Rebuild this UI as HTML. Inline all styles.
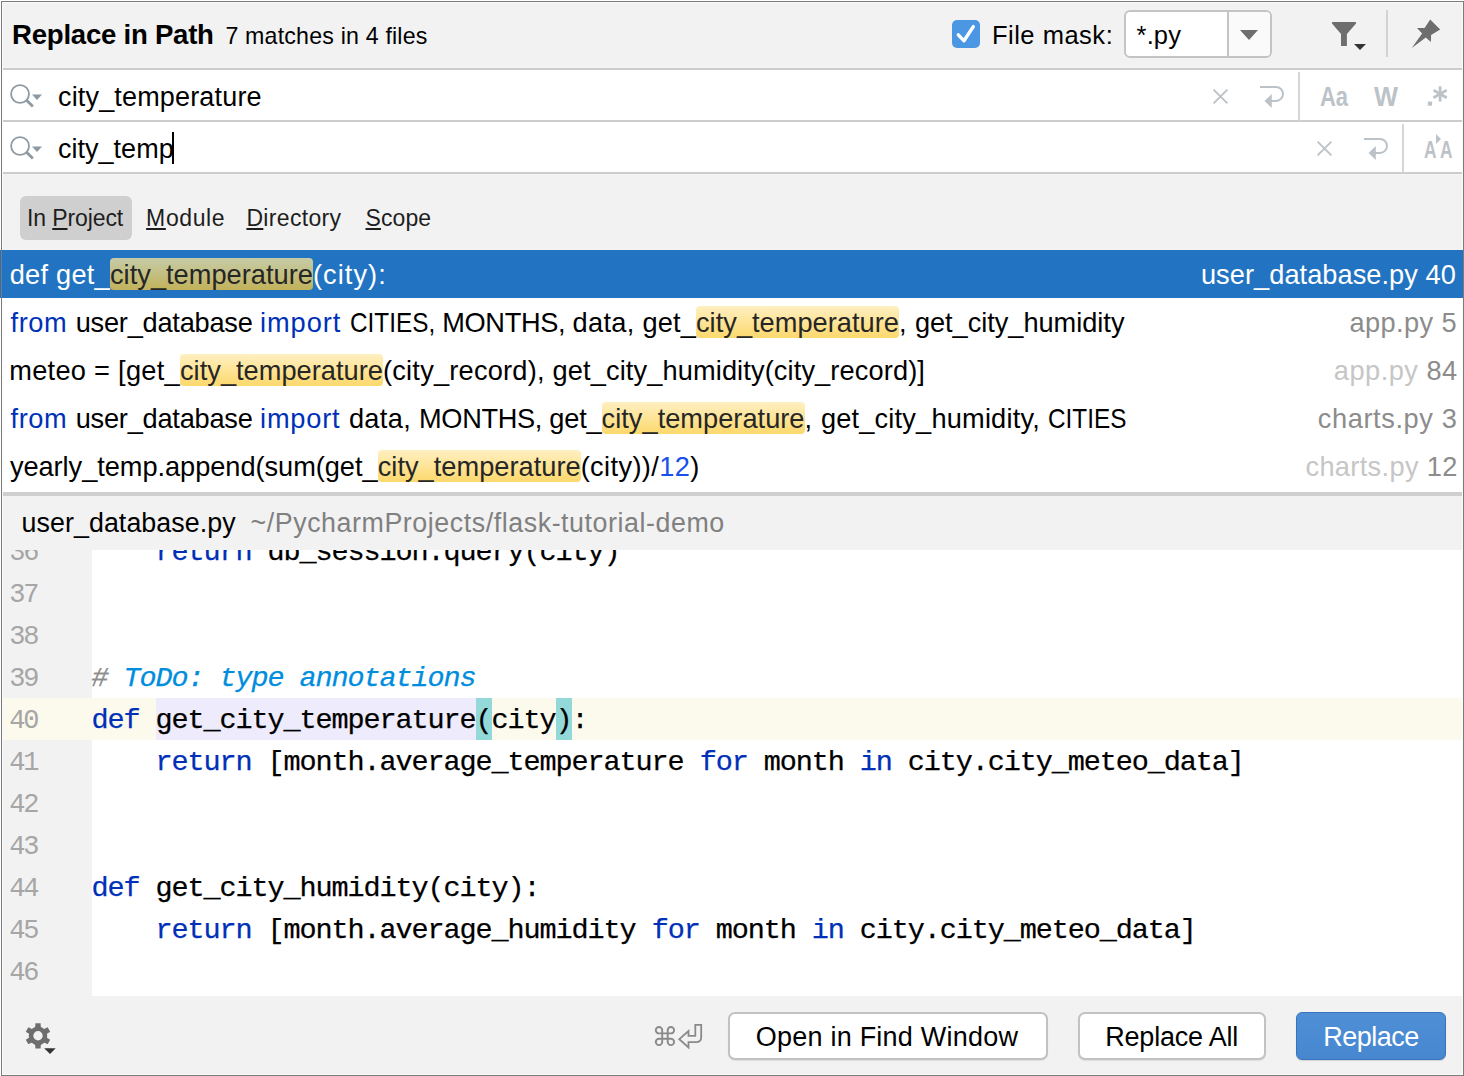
<!DOCTYPE html>
<html><head><meta charset="utf-8"><style>
html,body{margin:0;padding:0;background:#fff;width:1464px;height:1076px;overflow:hidden}
.a{position:absolute;box-sizing:content-box}
.t{position:absolute;white-space:pre;line-height:0;font-family:"Liberation Sans",sans-serif}
.b{font-weight:bold}
.m{font-family:"Liberation Mono",monospace}
.i{font-style:italic}
.u{text-decoration:underline;text-decoration-thickness:2px;text-underline-offset:2px}
svg.a{overflow:visible}
</style></head><body>
<div class="a" style="left:2px;top:2px;width:1460px;height:1072px;background:#f2f2f2;"></div>
<div class="t b" style="left:12.12px;top:35px;font-size:27.6px;color:#000;letter-spacing:-0.259px;">Replace in Path</div>
<div class="t" style="left:225.38px;top:36px;font-size:23.2px;color:#000;letter-spacing:0.184px;">7 matches in 4 files</div>
<div class="a" style="left:952px;top:20px;width:28px;height:28px;border-radius:5px;background:#4b97e4"></div>
<svg class="a" style="left:952px;top:20px" width="28" height="28" viewBox="0 0 28 28"><path d="M6.3 14.8 L12 20.8 L21.3 6.6" fill="none" stroke="#fff" stroke-width="3.4" stroke-linecap="round" stroke-linejoin="round"/></svg>
<div class="t" style="left:991.88px;top:35px;font-size:25.5px;color:#000;letter-spacing:0.517px;">File mask:</div>
<div class="a" style="left:1124px;top:10px;width:144px;height:44px;border:2px solid #c4c4c4;border-radius:6px;background:#fff;overflow:hidden"><div class="a" style="left:101px;top:0;width:41px;height:44px;background:#fafafa;border-left:2px solid #c4c4c4"></div></div>
<svg class="a" style="left:1238px;top:28px" width="22" height="14" viewBox="0 0 22 14"><path d="M2 2 H20 L11 12 Z" fill="#6e6e6e"/></svg>
<div class="t" style="left:1136.62px;top:35px;font-size:25.5px;color:#000;letter-spacing:0.125px;">*.py</div>
<svg class="a" style="left:1328px;top:16px" width="42" height="38" viewBox="0 0 42 38"><path d="M4 6 H28 V7.5 L18.9 18 V30 H13 V18 L4 7.5 Z" fill="#6e6e6e"/><path d="M26 28 H38 L32 34 Z" fill="#333"/></svg>
<div class="a" style="left:1386px;top:10px;width:2px;height:47px;background:#d3d3d3;"></div>
<svg class="a" style="left:1400px;top:10px" width="50" height="50" viewBox="0 0 50 50"><path d="M30.2 9.5 L40.2 19.5 L31.1 25.1 L30.9 32.1 L25.8 27.4 L11.8 38.1 L22.1 23.5 L17 18.1 L24.6 18.1 Z" fill="#6e6e6e"/></svg>
<div class="a" style="left:2px;top:67px;width:1460px;height:1px;background:#f5f5f5;"></div>
<div class="a" style="left:2px;top:68px;width:1460px;height:2px;background:#cccccc;"></div>
<div class="a" style="left:2px;top:70px;width:1460px;height:51px;background:#fff;"></div>
<div class="a" style="left:2px;top:120px;width:1460px;height:2px;background:#cccccc;"></div>
<div class="a" style="left:2px;top:122px;width:1460px;height:51px;background:#fff;"></div>
<div class="a" style="left:2px;top:172px;width:1460px;height:2px;background:#cccccc;"></div>
<div class="a" style="left:2px;top:174px;width:1460px;height:1px;background:#f5f5f5;"></div>
<svg class="a" style="left:8px;top:83px" width="38" height="30" viewBox="0 0 38 30"><circle cx="12.05" cy="11" r="8.95" fill="none" stroke="#8e9aa3" stroke-width="1.8"/><path d="M18.3 17 L24.9 23.6" stroke="#8e9aa3" stroke-width="2.8"/><path d="M24 11.5 H34 L29 17 Z" fill="#8e9aa3"/></svg>
<svg class="a" style="left:8px;top:135px" width="38" height="30" viewBox="0 0 38 30"><circle cx="12.05" cy="11" r="8.95" fill="none" stroke="#8e9aa3" stroke-width="1.8"/><path d="M18.3 17 L24.9 23.6" stroke="#8e9aa3" stroke-width="2.8"/><path d="M24 11.5 H34 L29 17 Z" fill="#8e9aa3"/></svg>
<div class="t" style="left:57.98px;top:97px;font-size:27px;color:#000;letter-spacing:0.168px;">city_temperature</div>
<div class="t" style="left:57.88px;top:149px;font-size:27px;color:#000;letter-spacing:0.031px;">city_temp</div>
<div class="a" style="left:172px;top:132px;width:2px;height:32px;background:#000;"></div>
<svg class="a" style="left:1212px;top:88px" width="17" height="17" viewBox="0 0 17 17"><path d="M1.6 1.6 L15.4 15.4 M15.4 1.6 L1.6 15.4" stroke="#bcc3c8" stroke-width="1.9"/></svg>
<svg class="a" style="left:1260px;top:85px" width="26" height="24" viewBox="0 0 26 24"><path d="M0 1.9 H16 A7 7 0 0 1 16 15.9 H10" fill="none" stroke="#bcc3c8" stroke-width="2"/><path d="M4.5 15.9 L11.8 8.9 V22.9 Z" fill="#bcc3c8"/></svg>
<div class="a" style="left:1298px;top:72px;width:2px;height:49px;background:#d6d6d6;"></div>
<svg class="a" style="left:1316px;top:80px" width="140" height="34" viewBox="0 0 140 34"><text x="4" y="26" font-family="Liberation Sans" font-weight="bold" font-size="27" fill="#bcc3c8" textLength="28" lengthAdjust="spacingAndGlyphs">Aa</text><text x="58" y="26" font-family="Liberation Sans" font-weight="bold" font-size="27" fill="#bcc3c8" textLength="24" lengthAdjust="spacingAndGlyphs">W</text><rect x="111.8" y="21.6" width="4.3" height="4.1" fill="#bcc3c8"/><g transform="translate(124.1 13.9)" stroke="#bcc3c8" stroke-width="2.8"><path d="M0 -7.6 V7.6"/><path d="M-6.6 -3.8 L6.6 3.8"/><path d="M-6.6 3.8 L6.6 -3.8"/></g></svg>
<svg class="a" style="left:1316px;top:140px" width="17" height="17" viewBox="0 0 17 17"><path d="M1.6 1.6 L15.4 15.4 M15.4 1.6 L1.6 15.4" stroke="#bcc3c8" stroke-width="1.9"/></svg>
<svg class="a" style="left:1364px;top:137px" width="26" height="24" viewBox="0 0 26 24"><path d="M0 1.9 H16 A7 7 0 0 1 16 15.9 H10" fill="none" stroke="#bcc3c8" stroke-width="2"/><path d="M4.5 15.9 L11.8 8.9 V22.9 Z" fill="#bcc3c8"/></svg>
<div class="a" style="left:1402px;top:124px;width:2px;height:49px;background:#d6d6d6;"></div>
<svg class="a" style="left:1422px;top:132px" width="34" height="30" viewBox="0 0 34 30"><text x="2" y="25.5" font-family="Liberation Sans" font-weight="bold" font-size="23.5" fill="#bcc3c8" textLength="12.5" lengthAdjust="spacingAndGlyphs">A</text><text x="18" y="25.5" font-family="Liberation Sans" font-weight="bold" font-size="23.5" fill="#bcc3c8" textLength="12.5" lengthAdjust="spacingAndGlyphs">A</text><path d="M14 2 L19 7 L14 12 Z" fill="#bcc3c8"/></svg>
<div class="a" style="left:20px;top:196px;width:112px;height:44px;border-radius:6px;background:#cfcfcf"></div>
<div class="t" style="left:27.07px;top:218px;font-size:23px;color:#1e1e1e;letter-spacing:-0.119px;">In <span class="u">P</span>roject</div>
<div class="t" style="left:146.12px;top:218px;font-size:23px;color:#1e1e1e;letter-spacing:0.600px;"><span class="u">M</span>odule</div>
<div class="t" style="left:246.43px;top:218px;font-size:23px;color:#1e1e1e;letter-spacing:0.322px;"><span class="u">D</span>irectory</div>
<div class="t" style="left:365.50px;top:218px;font-size:23px;color:#1e1e1e;letter-spacing:0.094px;"><span class="u">S</span>cope</div>
<div class="a" style="left:2px;top:250px;width:1460px;height:242px;background:#fff;"></div>
<div class="a" style="left:0px;top:250px;width:1462px;height:48px;background:#2274c2;"></div>
<div class="a" style="left:110px;top:258px;width:203px;height:32px;border-radius:4px;background:linear-gradient(#c6cca8,#c1b25a)"></div>
<div class="t" style="left:110.00px;top:275px;font-size:27.2px;color:#262626;letter-spacing:0.027px;">city_temperature</div>
<div class="t" style="left:9.68px;top:275px;font-size:27.2px;color:#fff;letter-spacing:0.253px;">def get_</div>
<div class="t" style="left:313.00px;top:275px;font-size:27.2px;color:#fff;letter-spacing:1.046px;">(city):</div>
<div class="t" style="left:1200.95px;top:275px;font-size:27.2px;color:#fff;letter-spacing:0.053px;">user_database.py 40</div>
<div class="a" style="left:696px;top:306px;width:203px;height:32px;border-radius:4px;background:linear-gradient(#fff0c2,#fcd86c)"></div>
<div class="t" style="left:696.00px;top:323px;font-size:27.2px;color:#262626;letter-spacing:0.027px;">city_temperature</div>
<div class="t" style="left:10.43px;top:323px;font-size:27.2px;color:#000;letter-spacing:0.654px;"><span style="color:#0030b8">from</span> </div>
<div class="t" style="left:75.65px;top:323px;font-size:27.2px;color:#000;letter-spacing:-0.222px;">user_database </div>
<div class="t" style="left:260.05px;top:323px;font-size:27.2px;color:#000;letter-spacing:0.942px;"><span style="color:#0030b8">import</span> </div>
<div class="t" style="left:349.77px;top:323px;font-size:27.2px;color:#000;transform:scaleX(0.8950);transform-origin:0 0;">CITIES,</div>
<div class="t" style="left:442.25px;top:323px;font-size:27.2px;color:#000;letter-spacing:-0.343px;">MONTHS, </div>
<div class="t" style="left:572.48px;top:323px;font-size:27.2px;color:#000;letter-spacing:0.342px;">data, </div>
<div class="t" style="left:642.58px;top:323px;font-size:27.2px;color:#000;letter-spacing:0.122px;">get_</div>
<div class="t" style="left:899.00px;top:323px;font-size:27.2px;color:#000;letter-spacing:0.381px;">, </div>
<div class="t" style="left:914.88px;top:323px;font-size:27.2px;color:#000;letter-spacing:-0.028px;">get_city_humidity</div>
<div class="t" style="left:1349.47px;top:323px;font-size:27.2px;color:#8c8c8c;letter-spacing:0.421px;">app.py 5</div>
<div class="a" style="left:180px;top:354px;width:203px;height:32px;border-radius:4px;background:linear-gradient(#fff0c2,#fcd86c)"></div>
<div class="t" style="left:180.00px;top:371px;font-size:27.2px;color:#262626;letter-spacing:0.027px;">city_temperature</div>
<div class="t" style="left:9.25px;top:371px;font-size:27.2px;color:#000;letter-spacing:0.282px;">meteo = [get_</div>
<div class="t" style="left:383.00px;top:371px;font-size:27.2px;color:#000;letter-spacing:0.222px;">(city_record), </div>
<div class="t" style="left:552.58px;top:371px;font-size:27.2px;color:#000;letter-spacing:0.120px;">get_city_humidity(city_record)]</div>
<div class="t" style="left:1333.78px;top:371px;font-size:27.2px;color:#8c8c8c;letter-spacing:0.506px;"><span style="color:#c6c6c6">app.py</span> 84</div>
<div class="a" style="left:601.6px;top:402px;width:203px;height:32px;border-radius:4px;background:linear-gradient(#fff0c2,#fcd86c)"></div>
<div class="t" style="left:601.60px;top:419px;font-size:27.2px;color:#262626;letter-spacing:0.027px;">city_temperature</div>
<div class="t" style="left:10.43px;top:419px;font-size:27.2px;color:#000;letter-spacing:0.654px;"><span style="color:#0030b8">from</span> </div>
<div class="t" style="left:75.65px;top:419px;font-size:27.2px;color:#000;letter-spacing:-0.222px;">user_database </div>
<div class="t" style="left:260.05px;top:419px;font-size:27.2px;color:#000;letter-spacing:0.814px;"><span style="color:#0030b8">import</span> </div>
<div class="t" style="left:348.88px;top:419px;font-size:27.2px;color:#000;letter-spacing:0.354px;">data, </div>
<div class="t" style="left:419.05px;top:419px;font-size:27.2px;color:#000;letter-spacing:-0.356px;">MONTHS, </div>
<div class="t" style="left:549.17px;top:419px;font-size:27.2px;color:#000;letter-spacing:-0.128px;">get_</div>
<div class="t" style="left:804.60px;top:419px;font-size:27.2px;color:#000;letter-spacing:0.581px;">, </div>
<div class="t" style="left:820.88px;top:419px;font-size:27.2px;color:#000;letter-spacing:0.192px;">get_city_humidity, </div>
<div class="t" style="left:1047.77px;top:419px;font-size:27.2px;color:#000;transform:scaleX(0.8950);transform-origin:0 0;">CITIES</div>
<div class="t" style="left:1317.78px;top:419px;font-size:27.2px;color:#8c8c8c;letter-spacing:0.610px;">charts.py 3</div>
<div class="a" style="left:377.7px;top:450px;width:203px;height:32px;border-radius:4px;background:linear-gradient(#fff0c2,#fcd86c)"></div>
<div class="t" style="left:377.70px;top:467px;font-size:27.2px;color:#262626;letter-spacing:0.027px;">city_temperature</div>
<div class="t" style="left:9.88px;top:467px;font-size:27.2px;color:#000;letter-spacing:-0.040px;">yearly_temp.append(sum(get_</div>
<div class="t" style="left:580.70px;top:467px;font-size:27.2px;color:#000;letter-spacing:0.382px;">(city))/<span style="color:#1750eb">12</span>)</div>
<div class="t" style="left:1305.47px;top:467px;font-size:27.2px;color:#8c8c8c;letter-spacing:0.339px;"><span style="color:#c6c6c6">charts.py</span> 12</div>
<div class="a" style="left:2px;top:492px;width:1460px;height:4px;background:#cfcfcf;"></div>
<div class="t" style="left:21.55px;top:523px;font-size:26.8px;color:#000;letter-spacing:0.070px;">user_database.py</div>
<div class="t" style="left:250.55px;top:523px;font-size:26.8px;color:#808080;letter-spacing:0.562px;">~/PycharmProjects/flask-tutorial-demo</div>
<div class="a" style="left:2px;top:550px;width:90px;height:446px;background:#f2f2f2;"></div>
<div class="a" style="left:92px;top:550px;width:1370px;height:446px;background:#fff;"></div>
<div class="a" style="left:0;top:550px;width:1462px;height:446px;overflow:hidden">
<div class="a" style="left:2px;top:148px;width:1460px;height:42px;background:#fcfaed"></div>
<div class="a" style="left:156px;top:148px;width:320px;height:42px;background:#edebfc"></div>
<div class="a" style="left:476px;top:148px;width:16px;height:42px;background:#93d9d9"></div>
<div class="a" style="left:556px;top:148px;width:16px;height:42px;background:#93d9d9"></div>
<div class="t m" style="left:9.30px;top:3px;font-size:27px;color:#a6a6a6;letter-spacing:-2.200px;">36</div>
<div class="t m" style="left:91.50px;top:3px;font-size:28.5px;color:#000;letter-spacing:-1.100px;-webkit-text-stroke:0.25px currentColor;">    <span style="color:#0030b8">return</span> db_session.query(city)</div>
<div class="t m" style="left:9.30px;top:45px;font-size:27px;color:#a6a6a6;letter-spacing:-2.200px;">37</div>
<div class="t m" style="left:9.30px;top:87px;font-size:27px;color:#a6a6a6;letter-spacing:-2.200px;">38</div>
<div class="t m" style="left:9.30px;top:129px;font-size:27px;color:#a6a6a6;letter-spacing:-2.200px;">39</div>
<div class="t m" style="left:91.50px;top:129px;font-size:28.5px;color:#000;letter-spacing:-1.100px;-webkit-text-stroke:0.25px currentColor;"><span class="i" style="color:#8c8c8c">#</span><span class="i" style="color:#008dde"> ToDo: type annotations</span></div>
<div class="t m" style="left:9.30px;top:171px;font-size:27px;color:#a6a6a6;letter-spacing:-2.200px;">40</div>
<div class="t m" style="left:91.50px;top:171px;font-size:28.5px;color:#000;letter-spacing:-1.100px;-webkit-text-stroke:0.25px currentColor;"><span style="color:#0030b8">def</span> get_city_temperature(city):</div>
<div class="t m" style="left:9.30px;top:213px;font-size:27px;color:#a6a6a6;letter-spacing:-2.200px;">41</div>
<div class="t m" style="left:91.50px;top:213px;font-size:28.5px;color:#000;letter-spacing:-1.100px;-webkit-text-stroke:0.25px currentColor;">    <span style="color:#0030b8">return</span> [month.average_temperature <span style="color:#0030b8">for</span> month <span style="color:#0030b8">in</span> city.city_meteo_data]</div>
<div class="t m" style="left:9.30px;top:255px;font-size:27px;color:#a6a6a6;letter-spacing:-2.200px;">42</div>
<div class="t m" style="left:9.30px;top:297px;font-size:27px;color:#a6a6a6;letter-spacing:-2.200px;">43</div>
<div class="t m" style="left:9.30px;top:339px;font-size:27px;color:#a6a6a6;letter-spacing:-2.200px;">44</div>
<div class="t m" style="left:91.50px;top:339px;font-size:28.5px;color:#000;letter-spacing:-1.100px;-webkit-text-stroke:0.25px currentColor;"><span style="color:#0030b8">def</span> get_city_humidity(city):</div>
<div class="t m" style="left:9.30px;top:381px;font-size:27px;color:#a6a6a6;letter-spacing:-2.200px;">45</div>
<div class="t m" style="left:91.50px;top:381px;font-size:28.5px;color:#000;letter-spacing:-1.100px;-webkit-text-stroke:0.25px currentColor;">    <span style="color:#0030b8">return</span> [month.average_humidity <span style="color:#0030b8">for</span> month <span style="color:#0030b8">in</span> city.city_meteo_data]</div>
<div class="t m" style="left:9.30px;top:423px;font-size:27px;color:#a6a6a6;letter-spacing:-2.200px;">46</div>
<div class="t m" style="left:9.30px;top:465px;font-size:27px;color:#a6a6a6;letter-spacing:-2.200px;">47</div>
</div>
<svg class="a" style="left:22px;top:1020px" width="40" height="40" viewBox="0 0 40 40"><g transform="translate(16 15.8)" fill="#6e6e6e"><path d="M-2.6 -12.6 H2.6 L2.9 -7 H-2.9 Z" transform="rotate(0)"/><path d="M-2.6 -12.6 H2.6 L2.9 -7 H-2.9 Z" transform="rotate(60)"/><path d="M-2.6 -12.6 H2.6 L2.9 -7 H-2.9 Z" transform="rotate(120)"/><path d="M-2.6 -12.6 H2.6 L2.9 -7 H-2.9 Z" transform="rotate(180)"/><path d="M-2.6 -12.6 H2.6 L2.9 -7 H-2.9 Z" transform="rotate(240)"/><path d="M-2.6 -12.6 H2.6 L2.9 -7 H-2.9 Z" transform="rotate(300)"/><circle r="7" fill="none" stroke="#6e6e6e" stroke-width="4.6"/></g><path d="M22.2 28.2 H33.7 L28 34 Z" fill="#333"/></svg>
<svg class="a" style="left:650px;top:1020px" width="60" height="32" viewBox="0 0 60 32"><path d="M12.2 21.9 V10.2 A3.2 3.2 0 1 0 9.0 13.4 H20.9 A3.2 3.2 0 1 0 17.7 10.2 V21.9 A3.2 3.2 0 1 0 20.9 18.7 H9.0 A3.2 3.2 0 1 0 12.2 21.9 Z" fill="none" stroke="#8a8a8a" stroke-width="1.9"/><path d="M29.3 19.2 L38.5 11 V15.8 H45.3 V4.8 H51.2 V17 Q51.2 22.2 46 22.2 H38.5 V27.4 Z" fill="none" stroke="#8a8a8a" stroke-width="1.8" stroke-linejoin="miter"/></svg>
<div class="a" style="left:728px;top:1012px;width:316px;height:44px;border:2px solid #c2c2c2;border-radius:7px;background:#fff;box-shadow:0 1px 1px rgba(0,0,0,.08)"></div>
<div class="a" style="left:1078px;top:1012px;width:184px;height:44px;border:2px solid #c2c2c2;border-radius:7px;background:#fff;box-shadow:0 1px 1px rgba(0,0,0,.08)"></div>
<div class="a" style="left:1296px;top:1012px;width:148px;height:46px;border:1px solid #3a72bb;border-radius:6px;background:linear-gradient(#4e8fd6,#4687d0);box-shadow:0 1px 1px rgba(0,0,0,.12)"></div>
<div class="t" style="left:755.75px;top:1037px;font-size:27px;color:#000;letter-spacing:0.229px;">Open in Find Window</div>
<div class="t" style="left:1105.25px;top:1037px;font-size:27px;color:#000;letter-spacing:-0.203px;">Replace All</div>
<div class="t" style="left:1323.25px;top:1037px;font-size:27px;color:#fff;letter-spacing:-0.521px;">Replace</div>
<div class="a" style="left:1px;top:1px;width:1461px;height:1073px;border:1px solid #7b7b7b;box-shadow:inset 1px 1px 0 #fafafa, inset -1px -1px 0 #fafafa;z-index:5"></div>
<div class="a" style="left:2px;top:250px;width:1px;height:48px;background:#2274c2;z-index:6"></div>
<div class="a" style="left:1462px;top:250px;width:1px;height:48px;background:#2274c2;z-index:6"></div>
</body></html>
